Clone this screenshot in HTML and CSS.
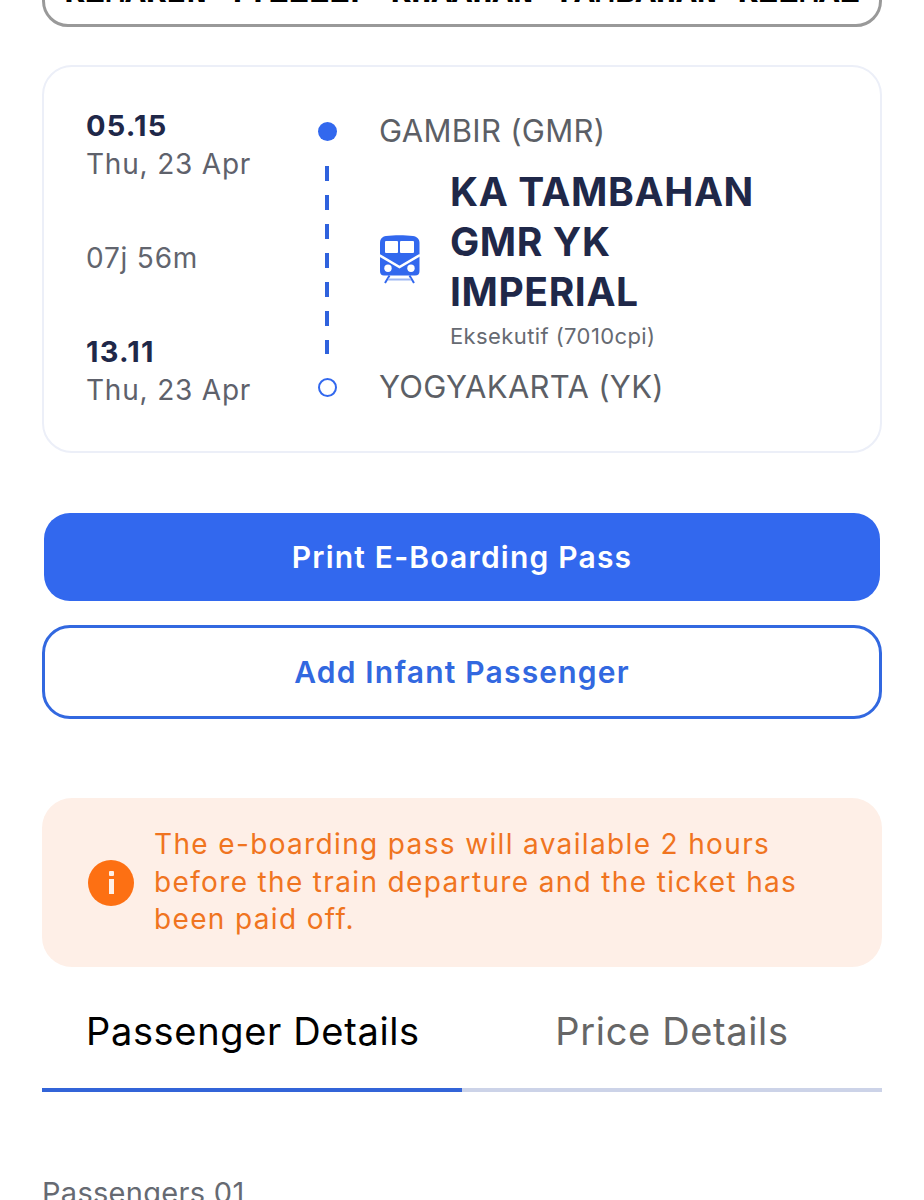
FILE: index.html
```html
<!DOCTYPE html>
<html lang="id">
<head>
<meta charset="utf-8">
<title>Booking detail</title>
<link rel="stylesheet" href="styles.css">
</head>
<body>
<main class="page">
  <section class="code-card"><div class="code-text">KEMARIN TTEEEEF KHAAHAN TAMBAHAN KEEMAE</div></section>

  <section class="trip-card">
    <div class="times">
      <div class="time-block"><div class="time">05.15</div><div class="date">Thu, 23 Apr</div></div>
      <div class="duration">07j 56m</div>
      <div class="time-block"><div class="time">13.11</div><div class="date">Thu, 23 Apr</div></div>
    </div>
    <div class="timeline">
      <span class="dot"></span>
      <span class="dash"></span>
      <span class="ring"></span>
    </div>
    <div class="route">
      <div class="station">GAMBIR (GMR)</div>
      <div class="train">
        <svg class="train-icon" viewBox="0 0 41 50" aria-hidden="true">
          <path class="fill" d="M1 9C1 5 3 2.500 7 2C15 1 26 1 34 2C38 2.500 40.500 5 40.500 9V37C40.500 40 39 41.500 36 41.500H5C2.500 41.500 1 40 1 37Z"/>
          <rect class="win" x="6" y="7" width="13" height="12" rx="1"/>
          <rect class="win" x="21" y="7" width="14" height="12" rx="1"/>
          <path class="chev" d="M0 21L20.500 33L41 21"/>
          <circle class="win" cx="9" cy="34.300" r="3.700"/>
          <circle class="win" cx="32" cy="34.300" r="3.700"/>
          <path class="rail" d="M10.500 41.500L6 49M30.500 41.500L35 49"/>
          <path class="tie" d="M9 45.500H32"/>
        </svg>
        <div class="train-info">
          <div class="train-name">KA TAMBAHAN GMR YK IMPERIAL</div>
          <div class="train-class">Eksekutif (7010cpi)</div>
        </div>
      </div>
      <div class="station">YOGYAKARTA (YK)</div>
    </div>
  </section>

  <button class="btn btn-primary" type="button">Print E-Boarding Pass</button>
  <button class="btn btn-outline" type="button">Add Infant Passenger</button>

  <section class="notice">
    <span class="notice-icon"><span class="i-dot"></span><span class="i-bar"></span></span>
    <p class="notice-text">The e-boarding pass will available 2 hours before the train departure and the ticket has been paid off.</p>
  </section>

  <nav class="tabs">
    <div class="tab tab-active">Passenger Details</div>
    <div class="tab">Price Details</div>
  </nav>

  <div class="passenger-label">Passengers 01</div>
</main>
</body>
</html>
```
FILE: styles.css
```css
* { box-sizing: border-box; }
html, body { margin: 0; height: 1200px; overflow: hidden; background: #fff; }
body { font-family: Inter, "Liberation Sans", sans-serif; }
.page { padding: 0 42px; display: flex; flex-direction: column; align-items: stretch; margin-top: -73px; }

.code-card { height: 100px; border: 3px solid #999; border-radius: 26px; display: flex; align-items: flex-end; justify-content: center; padding-bottom: 14px; overflow: hidden; }
.code-text { font-family: "Liberation Mono", monospace; font-weight: 700; font-size: 34px; line-height: 1; color: #000; white-space: nowrap; }

.trip-card { margin-top: 38px; height: 388px; border: 2px solid #eceff8; border-radius: 30px; padding: 43px 0 0 42px; display: flex; }
.times { width: 241px; height: 299px; display: flex; flex-direction: column; justify-content: space-between; }
.time { font-size: 29px; font-weight: 700; line-height: 36px; color: #1f2849; letter-spacing: 1.2px; margin-top: -2px; }
.date { font-size: 28px; line-height: 38px; color: #5e616b; letter-spacing: .8px; margin-top: 1px; }
.duration { font-size: 28px; line-height: 36px; color: #62656e; letter-spacing: .8px; padding-bottom: 4px; }

.timeline { width: 24px; margin-right: 40px; margin-left: -12px; padding-top: 12px; display: flex; flex-direction: column; align-items: center; }
.dot { width: 19px; height: 19px; border-radius: 50%; background: #3268ee; flex: none; }
.dash { width: 4px; height: 188px; margin-top: 25px; margin-bottom: 24px; flex: none; background: repeating-linear-gradient(to bottom, #2f62dd 0 15px, transparent 15px 29px); }
.ring { width: 19px; height: 19px; border-radius: 50%; border: 2.5px solid #3268ee; flex: none; }

.route { flex: 1; display: flex; flex-direction: column; margin-top: -1px; }
.station { font-size: 31px; line-height: 44px; color: #5c5f66; white-space: nowrap; letter-spacing: .3px; }
.train { display: flex; align-items: center; gap: 30px; height: 212px; }
.train-icon { width: 41px; height: 50px; flex: none; }
.fill { fill: #3268ee; }
.win { fill: #fff; }
.chev { fill: none; stroke: #fff; stroke-width: 2.5; }
.rail { fill: none; stroke: #3268ee; stroke-width: 2; }
.tie { fill: none; stroke: #9db6f3; stroke-width: 2; }
.train-info { width: 330px; padding-top: 14px; align-self: flex-start; }
.train-name { font-size: 39px; line-height: 50px; font-weight: 700; color: #1f2849; letter-spacing: .6px; }
.train-class { font-size: 22px; line-height: 28px; color: #666a72; margin-top: 5px; letter-spacing: .4px; }

.btn { display: block; font-family: inherit; font-size: 30px; font-weight: 600; text-align: center; padding: 0; letter-spacing: 1.200px; }
.btn-primary { margin: 60px 2px 0; height: 88px; border: 0; border-radius: 26px; background: #3268ee; color: #fff; }
.btn-outline { margin-top: 24px; height: 94px; border: 3px solid #3268e0; border-radius: 28px; background: #fff; color: #3268e0; }

.notice { margin-top: 79px; height: 169px; background: #feefe7; border-radius: 30px; padding: 0 50px 0 46px; display: flex; align-items: center; gap: 20px; }
.notice-icon { width: 46px; height: 46px; border-radius: 50%; background: #fd7013; flex: none; display: flex; flex-direction: column; align-items: center; justify-content: center; gap: 3px; }
.i-dot { width: 5px; height: 5px; background: #feefe7; border-radius: 1px; }
.i-bar { width: 5px; height: 15px; background: #feefe7; }
.notice-text { margin: 0; font-size: 28px; line-height: 37.500px; color: #f07420; letter-spacing: 1.350px; }

.tabs { display: grid; grid-template-columns: 1fr 1fr; margin-top: 29px; border-bottom: 4px solid #ccd3e8; }
.tab { height: 96px; font-size: 38px; line-height: 70px; color: #666; text-align: center; letter-spacing: .65px; margin-bottom: -4px; }
.tab-active { color: #000; border-bottom: 4px solid #3264d8; text-align: left; padding-left: 44px; }

.passenger-label { margin-top: 84px; font-size: 29px; line-height: 34px; color: #666a72; letter-spacing: .3px; }
```
